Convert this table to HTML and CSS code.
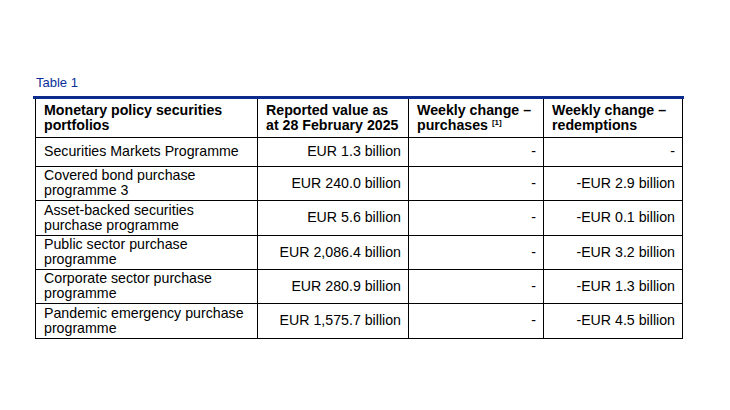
FILE: index.html
```html
<!DOCTYPE html>
<html lang="en">
<head>
<meta charset="utf-8">
<title>Table 1</title>
<link rel="stylesheet" href="styles.css">
</head>
<body>
<div class="page">
  <div class="caption">Table 1</div>
  <div class="rule"></div>
  <table class="data">
    <colgroup>
      <col class="c1"><col class="c2"><col class="c3"><col class="c4">
    </colgroup>
    <thead>
      <tr class="head">
        <th>Monetary policy securities<br>portfolios</th>
        <th>Reported value as<br>at 28 February 2025</th>
        <th>Weekly change –<br>purchases <sup>[1]</sup></th>
        <th>Weekly change –<br>redemptions</th>
      </tr>
    </thead>
    <tbody>
      <tr class="r1">
        <td>Securities Markets Programme</td>
        <td class="num">EUR 1.3 billion</td>
        <td class="num">-</td>
        <td class="num">-</td>
      </tr>
      <tr class="r2">
        <td>Covered bond purchase<br>programme 3</td>
        <td class="num">EUR 240.0 billion</td>
        <td class="num">-</td>
        <td class="num">-EUR 2.9 billion</td>
      </tr>
      <tr class="r3">
        <td>Asset-backed securities<br>purchase programme</td>
        <td class="num">EUR 5.6 billion</td>
        <td class="num">-</td>
        <td class="num">-EUR 0.1 billion</td>
      </tr>
      <tr class="r2">
        <td>Public sector purchase<br>programme</td>
        <td class="num">EUR 2,086.4 billion</td>
        <td class="num">-</td>
        <td class="num">-EUR 3.2 billion</td>
      </tr>
      <tr class="r2">
        <td>Corporate sector purchase<br>programme</td>
        <td class="num">EUR 280.9 billion</td>
        <td class="num">-</td>
        <td class="num">-EUR 1.3 billion</td>
      </tr>
      <tr class="r3">
        <td>Pandemic emergency purchase<br>programme</td>
        <td class="num">EUR 1,575.7 billion</td>
        <td class="num">-</td>
        <td class="num">-EUR 4.5 billion</td>
      </tr>
    </tbody>
  </table>
</div>
</body>
</html>
```
FILE: styles.css
```css
html, body {
  margin: 0;
  padding: 0;
  background: #ffffff;
}
body {
  font-family: "Liberation Sans", Arial, sans-serif;
  font-size: 14.2px;
  line-height: 15px;
  color: #000000;
}
.page {
  padding: 75px 0 0 33px;
}
.caption {
  color: #0a2f9a;
  font-size: 13px;
  padding-left: 3px;
  height: 15px;
  line-height: 15px;
}
.rule {
  margin-top: 6px;
  width: 651px;
  height: 3px;
  background: #0b2c8c;
}
.data {
  margin-left: 2px;
  border-collapse: collapse;
  table-layout: fixed;
  width: 647px;
}
.c1 { width: 222px; }
.c2 { width: 151px; }
.c3 { width: 135px; }
.c4 { width: 139px; }
.data th,
.data td {
  border: 1px solid #000000;
  padding: 0 7px 0 8px;
  vertical-align: middle;
  text-align: left;
  white-space: nowrap;
}
.data th {
  font-weight: bold;
  border-top: none;
}
.data td.num {
  text-align: right;
}
.head { height: 38px; }
.r1 { height: 29px; }
.r2 { height: 34px; }
.r3 { height: 35px; }
sup {
  font-size: 8px;
  line-height: 8px;
  vertical-align: 5px;
}
```
